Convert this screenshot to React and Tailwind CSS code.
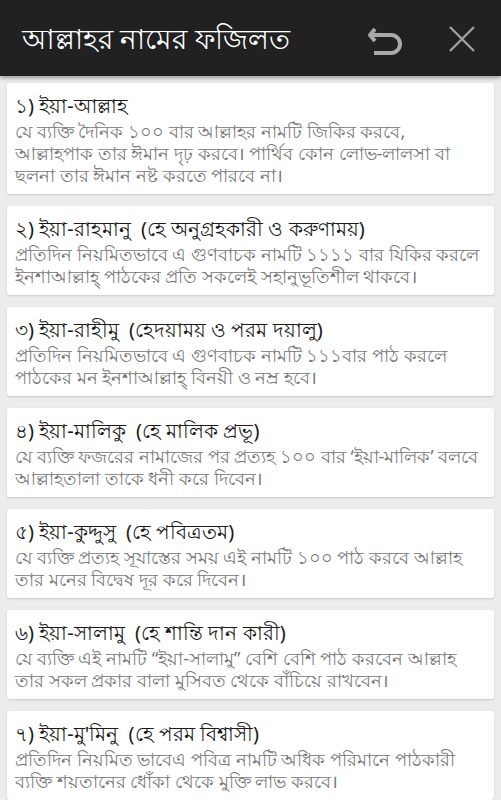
import React from 'react';

const items = [
  {
    title: '১) ইয়া-আল্লাহ',
    lines: [
      'যে ব্যক্তি দৈনিক ১০০ বার আল্লাহর নামটি জিকির করবে,',
      'আল্লাহপাক তার ঈমান দৃঢ় করবে। পার্থিব কোন লোভ-লালসা বা',
      'ছলনা তার ঈমান নষ্ট করতে পারবে না।',
    ],
  },
  {
    title: '২) ইয়া-রাহমানু  (হে অনুগ্রহকারী ও করুণাময়)',
    lines: [
      'প্রতিদিন নিয়মিতভাবে এ গুণবাচক নামটি ১১১১ বার যিকির করলে',
      'ইনশাআল্লাহ্ পাঠকের প্রতি সকলেই সহানুভূতিশীল থাকবে।',
    ],
  },
  {
    title: '৩) ইয়া-রাহীমু  (হেদয়াময় ও পরম দয়ালু)',
    lines: [
      'প্রতিদিন নিয়মিতভাবে এ গুণবাচক নামটি ১১১বার পাঠ করলে',
      'পাঠকের মন ইনশাআল্লাহ্ বিনয়ী ও নম্র হবে।',
    ],
  },
  {
    title: '৪) ইয়া-মালিকু  (হে মালিক প্রভূ)',
    lines: [
      'যে ব্যক্তি ফজরের নামাজের পর প্রত্যহ ১০০ বার ‘ইয়া-মালিক’ বলবে',
      'আল্লাহতালা তাকে ধনী করে দিবেন।',
    ],
  },
  {
    title: '৫) ইয়া-কুদ্দুসু  (হে পবিত্রতম)',
    lines: [
      'যে ব্যক্তি প্রত্যহ সূযাস্তের সময় এই নামটি ১০০ পাঠ করবে আল্লাহ',
      'তার মনের বিদ্বেষ দূর করে দিবেন।',
    ],
  },
  {
    title: '৬) ইয়া-সালামু  (হে শান্তি দান কারী)',
    lines: [
      'যে ব্যক্তি এই নামটি “ইয়া-সালামু” বেশি বেশি পাঠ করবেন আল্লাহ',
      'তার সকল প্রকার বালা মুসিবত থেকে বাঁচিয়ে রাখবেন।',
    ],
  },
  {
    title: '৭) ইয়া-মু\'মিনু  (হে পরম বিশ্বাসী)',
    lines: [
      'প্রতিদিন নিয়মিত ভাবেএ পবিত্র নামটি অধিক পরিমানে পাঠকারী',
      'ব্যক্তি শয়তানের ধোঁকা থেকে মুক্তি লাভ করবে।',
    ],
  },
];

const UndoIcon = () => (
  <svg width="36" height="32" viewBox="0 0 36 32" className="mt-[8px]">
    <path
      d="M8 3 L3 9 L8 15 M3 9 H24 A9 9 0 0 1 24 27 H7"
      fill="none"
      stroke="#a9a9a9"
      strokeWidth="4"
      strokeLinejoin="round"
    />
  </svg>
);

const CloseIcon = () => (
  <svg width="26" height="26" viewBox="0 0 26 26" className="mt-[1px]">
    <path d="M1 1 L25 25 M25 1 L1 25" stroke="#a0a0a0" strokeWidth="2.4" fill="none" />
  </svg>
);

export default function App() {
  return (
    <div className="w-[501px] h-[800px] overflow-hidden bg-[#ececec] font-['Noto_Sans','Liberation_Sans',sans-serif]">
      {/* Header */}
      <div className="h-[76px] bg-[#212121] flex items-center pl-[22px] pr-[26px] shadow-[0_2px_4px_rgba(0,0,0,0.35)] relative z-10">
        <h1 className="flex-1 text-white text-[28px] leading-none">আল্লাহর নামের ফজিলত</h1>
        <div className="flex items-center gap-[46px]">
          <UndoIcon />
          <CloseIcon />
        </div>
      </div>

      {/* List */}
      <div className="flex flex-col gap-[12px] px-[7px] pt-[7px]">
        {items.map((item, i) => (
          <div key={i} className="bg-white rounded-[3px] shadow-[0_1px_2px_rgba(0,0,0,0.15)] px-2 pt-[9px] pb-2">
            <div className="text-[#1a1a1a] text-[20px] leading-[28px] whitespace-pre">{item.title}</div>
            <div className="text-[#777777] text-[18px] leading-[22px]">
              {item.lines.map((line, j) => (
                <div key={j} className="whitespace-nowrap">{line}</div>
              ))}
            </div>
          </div>
        ))}
      </div>
    </div>
  );
}
